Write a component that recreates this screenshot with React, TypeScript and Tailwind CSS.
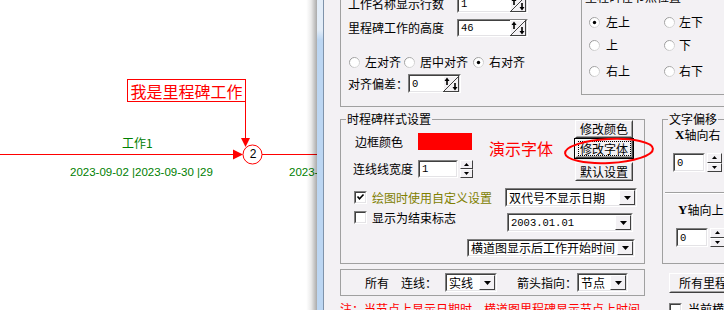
import React from 'react'

const FACE = 'bg-[#f3f1f4]'

type FieldProps = { className?: string; value?: string; mono?: boolean; children?: React.ReactNode }

const Field = ({ className = '', value = '', mono = true, children }: FieldProps) => (
  <div className={`flex shrink-0 bg-white border border-t-[#808080] border-l-[#808080] border-b-white border-r-white ${className}`}>
    <div className="flex flex-1 min-w-0 border border-t-[#404040] border-l-[#404040] border-b-[#e4e3e6] border-r-[#e4e3e6]">
      <div
        className={`flex-1 min-w-0 pl-[2px] flex items-center overflow-hidden whitespace-nowrap ${
          mono ? "font-['Liberation_Mono',monospace] text-[10.5px]" : ''
        }`}
      >
        {value}
      </div>
      {children}
    </div>
  </div>
)

// the odd spin button with a diagonal and two arrows
const DiagSpin = () => (
  <svg width="16" height="16" viewBox="0 0 16 16" className="shrink-0 self-center">
    <rect x="0" y="0" width="16" height="16" fill="#f3f1f4" />
    <line x1="0.5" y1="0" x2="0.5" y2="16" stroke="#ffffff" />
    <line x1="0" y1="0.5" x2="16" y2="0.5" stroke="#ffffff" />
    <line x1="15.5" y1="0" x2="15.5" y2="16" stroke="#404040" />
    <line x1="0" y1="15.5" x2="16" y2="15.5" stroke="#404040" />
    <line x1="1" y1="15" x2="15" y2="1" stroke="#404040" />
    <polygon points="1.5,5 4,1.5 6.5,5" fill="#000" />
    <rect x="3.2" y="4.5" width="1.6" height="4.5" fill="#000" />
    <rect x="11.2" y="7" width="1.6" height="4.5" fill="#000" />
    <polygon points="9.5,11 14.5,11 12,14.5" fill="#000" />
  </svg>
)

const DropBtn = () => (
  <div className={`w-[16px] h-full shrink-0 ${FACE} border border-t-white border-l-white border-b-[#404040] border-r-[#404040] flex items-center justify-center`}>
    <svg width="7" height="4" viewBox="0 0 7 4">
      <polygon points="0,0 7,0 3.5,4" fill="#000" />
    </svg>
  </div>
)

const Combo = ({ className = '', value, mono = false }: { className?: string; value: string; mono?: boolean }) => (
  <Field className={className} value={value} mono={mono}>
    <DropBtn />
  </Field>
)

const Half = ({ up }: { up?: boolean }) => (
  <div className={`flex-1 ${FACE} border border-t-white border-l-white border-b-[#404040] border-r-[#404040] flex items-center justify-center`}>
    <svg width="5" height="3" viewBox="0 0 5 3">
      <polygon points={up ? '0,3 5,3 2.5,0' : '0,0 5,0 2.5,3'} fill="#000" />
    </svg>
  </div>
)

const UpDown = ({ className = '' }: { className?: string }) => (
  <div className={`flex flex-col shrink-0 ${className}`}>
    <Half up />
    <Half />
  </div>
)

const Radio = ({ checked }: { checked?: boolean }) => (
  <svg width="11" height="11" viewBox="0 0 11 11" className="shrink-0">
    <defs>
      <linearGradient id="rg" x1="0" y1="0" x2="1" y2="1">
        <stop offset="0" stopColor="#8a8a8a" />
        <stop offset="1" stopColor="#e6e6e6" />
      </linearGradient>
    </defs>
    <circle cx="5.5" cy="5.5" r="5" fill="#fff" stroke="url(#rg)" />
    {checked && <circle cx="5.5" cy="5.5" r="1.7" fill="#000" />}
  </svg>
)

const Check = ({ checked }: { checked?: boolean }) => (
  <div className="w-[13px] h-[13px] shrink-0 bg-white border border-t-[#808080] border-l-[#808080] border-b-white border-r-white">
    <div className="w-full h-full border border-t-[#404040] border-l-[#404040] border-b-[#e4e3e6] border-r-[#e4e3e6]">
      {checked && (
        <svg width="9" height="9" viewBox="0 0 9 9" className="block">
          <path d="M1.5 3.5 L3.5 5.8 L7.5 1.5" stroke="#000" strokeWidth="1.6" fill="none" />
        </svg>
      )}
    </div>
  </div>
)

const Btn = ({ className = '', children }: { className?: string; children: React.ReactNode }) => (
  <div className={`shrink-0 ${FACE} border border-t-white border-l-white border-b-[#404040] border-r-[#404040] ${className}`}>
    <div className="h-full border border-transparent border-b-[#a0a0a0] border-r-[#a0a0a0] flex items-center justify-center whitespace-nowrap">
      {children}
    </div>
  </div>
)

const Canvas = () => (
  <div className="relative w-[317px] h-full shrink-0 bg-white overflow-hidden">
    <svg className="absolute left-0 top-0" width="317" height="310" viewBox="0 0 317 310">
      <line x1="0" y1="154.5" x2="236" y2="154.5" stroke="#ff0000" />
      <polygon points="233,149.5 243,154.5 233,159.5" fill="#ff0000" />
      <line x1="262" y1="154.5" x2="317" y2="154.5" stroke="#ff0000" />
      <line x1="245.5" y1="101" x2="245.5" y2="140" stroke="#ff0000" />
      <polygon points="241,138 250,138 245.5,147" fill="#ff0000" />
      <circle cx="252.5" cy="154.5" r="9.5" fill="#fff" stroke="#ff0000" />
    </svg>
    <div className="absolute left-[127px] top-[79px] w-[119px] h-[23px] border border-[#ff0000] bg-white flex items-center justify-center text-[16px] leading-[20px] text-[#ff0000]">
      我是里程碑工作
    </div>
    <div className="absolute left-[247px] top-[147px] w-[12px] h-[14px] text-center font-['Liberation_Sans',sans-serif] text-[12px] leading-[14px]">
      2
    </div>
    <div className="absolute left-[122px] top-[136px] text-[12px] leading-[14px] text-[#008000]">工作1</div>
    <div className="absolute left-[70px] top-[165px] font-['Liberation_Sans',sans-serif] text-[11.5px] leading-[14px] text-[#008000] whitespace-nowrap">
      2023-09-02 |2023-09-30 |29
    </div>
    <div className="absolute left-[289px] top-[165px] font-['Liberation_Sans',sans-serif] text-[11.5px] leading-[14px] text-[#008000] whitespace-nowrap">
      2023-09-01
    </div>
    {/* window drop shadow, see-through */}
    <div className="absolute right-0 top-0 h-full w-[12px] bg-linear-to-r from-[#00000000] from-[10%] via-[#00000014] to-[#00000055]" />
  </div>
)

const Legend = ({ className = '', children }: { className?: string; children: React.ReactNode }) => (
  <div className={`absolute -top-[8px] px-[1px] ${FACE} leading-[14px] whitespace-nowrap ${className}`}>{children}</div>
)

const Dialog = () => (
  <div className={`flex-1 h-full ${FACE} overflow-hidden flex flex-col pl-[16px]`}>
    {/* top group */}
    <div className="flex h-[107px] w-[420px] shrink-0 border-l border-b border-[#a0a0a0]">
      <div className="w-[240px] shrink-0 flex flex-col">
        <div className="-mt-[5px] h-[18px] flex items-center">
          <span className="pl-[7px] w-[116px]">工作名称显示行数</span>
          <Field className="w-[71px] h-[18px]" value="1">
            <DiagSpin />
          </Field>
        </div>
        <div className="mt-[6px] h-[18px] flex items-center">
          <span className="pl-[7px] w-[116px]">里程碑工作的高度</span>
          <Field className="w-[71px] h-[18px]" value="46">
            <DiagSpin />
          </Field>
        </div>
        <div className="mt-[18px] h-[14px] flex items-center">
          <span className="ml-[8px]"><Radio /></span>
          <span className="ml-[5px]">左对齐</span>
          <span className="ml-[3px]"><Radio /></span>
          <span className="ml-[5px]">居中对齐</span>
          <span className="ml-[5px]"><Radio checked /></span>
          <span className="ml-[5px]">右对齐</span>
        </div>
        <div className="mt-[5px] h-[19px] flex items-center">
          <span className="pl-[7px] w-[67px]">对齐偏差：</span>
          <Field className="w-[53px] h-[19px]" value="0">
            <DiagSpin />
          </Field>
        </div>
      </div>
      <div className="relative -mt-[3px] h-[98px] w-[200px] shrink-0 border-l border-t border-b border-[#a0a0a0] flex flex-col">
        <Legend className="left-[2px]">里程碑在节点位置</Legend>
        {[
          ['左上', '左下', 'mt-[17px]', true],
          ['上', '下', 'mt-[9px]', false],
          ['右上', '右下', 'mt-[12px]', false],
        ].map(([a, b, m, c]) => (
          <div key={a as string} className={`${m} h-[14px] flex pl-[7px]`}>
            <div className="w-[75px] flex items-center">
              <Radio checked={c as boolean} />
              <span className="ml-[6px]">{a}</span>
            </div>
            <div className="w-[75px] flex items-center">
              <Radio />
              <span className="ml-[4px]">{b}</span>
            </div>
          </div>
        ))}
      </div>
    </div>

    {/* middle row */}
    <div className="mt-[12px] flex shrink-0">
      <div className="relative w-[305px] h-[145px] shrink-0 border border-[#a0a0a0] flex flex-col">
        <Legend className="left-[5px]">时程碑样式设置</Legend>
        <div className="flex">
          <div className="w-[234px] shrink-0 flex flex-col">
            <div className="mt-[13px] h-[17px] flex items-start">
              <span className="ml-[14px] w-[63px] mt-[2px] leading-[14px]">边框颜色</span>
              <div className="w-[54px] h-[17px] bg-[#ff0000]" />
              <span className="ml-[17px] mt-[5px] text-[16px] leading-[20px] text-[#ff0000] whitespace-nowrap">演示字体</span>
            </div>
            <div className="mt-[10px] h-[18px] flex items-center">
              <span className="ml-[12px] w-[65px]">连线线宽度</span>
              <Field className="w-[40px] h-[18px]" value="1" />
              <UpDown className="ml-[2px] w-[13px] h-[18px]" />
            </div>
          </div>
          <div className="flex flex-col">
            <Btn className="w-[58px] h-[18px]">修改颜色</Btn>
            <div className="-ml-[1px] w-[60px] h-[21px] border border-black">
              <Btn className="w-full h-full">
                <span className="w-[53px] h-[15px] flex items-center justify-center border border-dotted border-black leading-[13px]">修改字体</span>
              </Btn>
            </div>
            <Btn className="mt-[3px] w-[58px] h-[19px]">默认设置</Btn>
          </div>
        </div>
        <div className="mt-[7px] h-[19px] flex items-center">
          <span className="ml-[13px]"><Check checked /></span>
          <span className="ml-[5px] w-[120px] text-[#808000] whitespace-nowrap">绘图时使用自定义设置</span>
          <Combo className="ml-[13px] w-[132px] h-[19px]" value="双代号不显示日期" />
        </div>
        <div className="mt-[4px] flex items-start">
          <span className="ml-[13px]"><Check /></span>
          <span className="ml-[5px] w-[84px] whitespace-nowrap">显示为结束标志</span>
          <Combo className="ml-[51px] mt-[2px] w-[126px] h-[19px]" value="2003.01.01" mono />
        </div>
        <div className="mt-[7px] flex">
          <Combo className="ml-[126px] w-[168px] h-[18px]" value="横道图显示后工作开始时间" />
        </div>
      </div>

      <div className="relative ml-[17px] w-[100px] h-[145px] shrink-0 border border-[#a0a0a0] flex flex-col">
        <Legend className="left-[5px]">文字偏移</Legend>
        <div className="ml-[12px] mt-[8px] h-[14px] flex items-center whitespace-nowrap">
          <span className="font-['Liberation_Serif',serif] font-bold text-[13px]">X</span>
          <span>轴向右</span>
        </div>
        <div className="mt-[11px] ml-[10px] flex">
          <Field className="w-[32px] h-[19px]" value="0" />
          <UpDown className="ml-[2px] w-[15px] h-[19px]" />
        </div>
        <div className="mt-[20px] ml-[2px] h-[2px] border-t border-t-[#a0a0a0] border-b border-b-white" />
        <div className="ml-[15px] mt-[9px] h-[14px] flex items-center whitespace-nowrap">
          <span className="font-['Liberation_Serif',serif] font-bold text-[13px]">Y</span>
          <span>轴向上</span>
        </div>
        <div className="mt-[11px] ml-[13px] flex">
          <Field className="w-[32px] h-[19px]" value="0" />
          <UpDown className="ml-[2px] w-[15px] h-[19px]" />
        </div>
      </div>
    </div>

    {/* bottom row */}
    <div className="mt-[5px] flex items-start shrink-0">
      <div className="w-[305px] h-[27px] shrink-0 border border-[#a0a0a0] flex items-center whitespace-nowrap">
        <span className="ml-[24px]">所有</span>
        <span className="ml-[12px]">连线：</span>
        <Combo className="ml-[8px] w-[52px] h-[19px]" value="实线" />
        <span className="ml-[20px]">箭头指向：</span>
        <Combo className="w-[51px] h-[19px]" value="节点" />
      </div>
      <Btn className="ml-[24px] mt-[4px] w-[100px] h-[20px]">
        <span className="w-full pl-[8px]">所有里程碑设置</span>
      </Btn>
    </div>

    <div className="mt-[6px] flex items-start shrink-0 leading-[14px] whitespace-nowrap">
      <span className="w-[329px] shrink-0 text-[#ff0000]">注：当节点上显示日期时，横道图里程碑显示节点上时间。</span>
      <span className="mt-[1px]"><Check /></span>
      <span className="ml-[6px]">当前横道图</span>
    </div>
  </div>
)

export default function App() {
  return (
    <div className="relative flex w-[724px] h-[310px] overflow-hidden bg-white font-['Noto_Sans_CJK_SC',sans-serif] text-[12px] leading-[14px] text-black">
      <Canvas />
      {/* window frame */}
      <div className="w-[7px] h-full shrink-0 border-r border-r-[#7f93aa] bg-linear-to-b from-[#e3edf8] from-[30px] to-[#bcd6f2] to-[40px]" />
      <Dialog />
      {/* hand-drawn annotation around the font button */}
      <svg className="absolute left-[560px] top-[132px]" width="100" height="38" viewBox="0 0 100 38">
        <ellipse cx="49" cy="19" rx="44" ry="12" transform="rotate(-3 49 19)" fill="none" stroke="#ff0000" strokeWidth="2" />
      </svg>
    </div>
  )
}
